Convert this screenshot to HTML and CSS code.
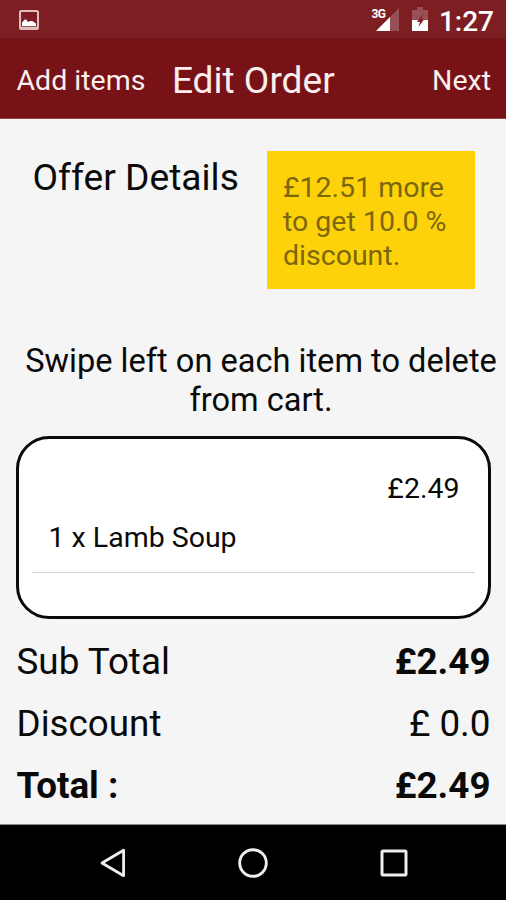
FILE: index.html
```html
<!DOCTYPE html>
<html lang="en">
<head>
<meta charset="utf-8">
<title>Edit Order</title>
<link rel="stylesheet" href="styles.css">
</head>
<body>
<div class="screen">
  <div class="status-bar">
    <svg class="status-picture" width="22" height="22" viewBox="0 0 22 22">
      <rect x="2" y="2" width="18" height="18" rx="1" fill="none" stroke="#dfbfc0" stroke-width="2"/>
      <path d="M2 18.900h18" stroke="#dfbfc0" stroke-width="2.500"/>
      <path d="M4 17v-3.500l3.300-3.500 3 3 2-1h2l3.700 2.500v2.500z" fill="#fff"/>
    </svg>
    <div class="status-right">
      <div class="signal">
        <span class="network">3G</span>
        <svg width="23" height="23" viewBox="0 0 23 23">
          <path d="M23 0v23H0z" fill="#975055"/>
          <path d="M14 9v14H0z" fill="#fff"/>
        </svg>
      </div>
      <svg class="battery" width="16" height="24" viewBox="0 0 16 24">
        <path d="M5 0h6v3h5v10H0V3h5z" fill="#975055"/>
        <path d="M0 13h16v11H0z" fill="#fff"/>
        <path d="M11 7L5 15h3l-1.500 5L12 12.500H9.500z" fill="#7d1e23"/>
      </svg>
      <span class="clock">1:27</span>
    </div>
  </div>
  <header class="app-bar">
    <span class="action">Add items</span>
    <h1 class="title">Edit Order</h1>
    <span class="action next">Next</span>
  </header>
  <main class="content">
    <section class="offer">
      <h2 class="offer-title">Offer Details</h2>
      <div class="offer-note">£12.51 more<br>to get 10.0 %<br>discount.</div>
    </section>
    <p class="hint">Swipe left on each item to delete<br>from cart.</p>
    <section class="cart">
      <div class="cart-item">
        <div class="item-price">£2.49</div>
        <div class="item-name">1 x Lamb Soup</div>
      </div>
    </section>
    <section class="totals">
      <div class="row"><span>Sub Total</span><span class="strong">£2.49</span></div>
      <div class="row"><span>Discount</span><span>£ 0.0</span></div>
      <div class="row"><span class="strong">Total :</span><span class="strong">£2.49</span></div>
    </section>
  </main>
  <nav class="nav-bar">
    <svg width="26" height="30" viewBox="0 0 26 30"><path d="M23.600 2.300v25.400L2 15z" fill="none" stroke="#eee" stroke-width="2.800" stroke-linejoin="round"/></svg>
    <svg width="30" height="30" viewBox="0 0 30 30"><circle cx="15" cy="15" r="13.300" fill="none" stroke="#eee" stroke-width="2.900"/></svg>
    <svg width="28" height="28" viewBox="0 0 28 28"><rect x="2" y="2" width="24" height="24" rx="1" fill="none" stroke="#eee" stroke-width="3"/></svg>
  </nav>
</div>
</body>
</html>
```

FILE: styles.css
```css
* { box-sizing: border-box; }
body { margin: 0; background: #f5f5f5; }
.screen {
  width: 506px;
  height: 900px;
  display: flex;
  flex-direction: column;
  overflow: hidden;
  background: #f5f5f5;
  color: #0a0a0a;
  font-family: Roboto, sans-serif;
  font-size: 28.5px;
}
.status-bar {
  height: 38px;
  flex: none;
  display: flex;
  justify-content: space-between;
  align-items: flex-start;
  padding: 0 12px 0 18px;
  background: #7d1e23;
  color: #fff;
}
.status-picture { margin-top: 8.500px; }
.status-right { display: flex; align-items: flex-start; }
.signal { display: flex; margin-top: 8px; }
.network {
  width: 15px;
  margin-right: -10px;
  font-size: 12px;
  line-height: 12px;
  font-weight: 700;
  letter-spacing: -0.5px;
}
.battery { margin: 7px 0 0 12.5px; }
.clock {
  margin-left: 11px;
  font-size: 28px;
  line-height: 43px;
  font-weight: 500;
}
.app-bar {
  height: 81px;
  flex: none;
  display: flex;
  align-items: center;
  padding: 5px 15px 0 16.5px;
  background: #771316;
  color: #fbeeee;
  border-bottom: 1px solid #8f4547;
}
.title { margin: 0 0 0 26.5px; font-size: 37.1px; font-weight: 400; }
.next { margin-left: auto; }
.content { flex: 1; display: flex; flex-direction: column; }
.offer {
  display: flex;
  justify-content: space-between;
  align-items: flex-start;
  padding: 32px 31px 0 32.5px;
}
.offer-title { margin: 4px 0 0; font-size: 37.2px; line-height: 44px; font-weight: 400; }
.offer-note {
  width: 208px;
  height: 138px;
  padding: 20px 0 0 16px;
  background: #fed20a;
  color: #7b670d;
  line-height: 34px;
}
.hint {
  margin: 53px 0 0 16px;
  text-align: center;
  font-size: 32.6px;
  line-height: 39px;
  white-space: nowrap;
}
.cart {
  width: 475px;
  height: 183px;
  margin: 16px 0 0 16px;
  padding: 31px 13px 0;
  border: 3px solid #0a0a0a;
  border-radius: 33px;
  background: #fff;
}
.cart-item {
  height: 103px;
  padding: 0 15.5px 0 16.5px;
  border-bottom: 1px solid #d2d2d2;
}
.item-price { text-align: right; line-height: 38px; }
.item-name { margin-top: 11px; line-height: 38px; }
.totals { padding: 12px 15.5px 0 16.5px; font-size: 36.8px; }
.row { display: flex; justify-content: space-between; line-height: 62px; }
.strong { font-weight: 700; }
.nav-bar {
  height: 76px;
  flex: none;
  display: flex;
  align-items: center;
  justify-content: space-between;
  padding: 0 98px 0 100px;
  background: #000;
  border-top: 1px solid #888;
}
```
